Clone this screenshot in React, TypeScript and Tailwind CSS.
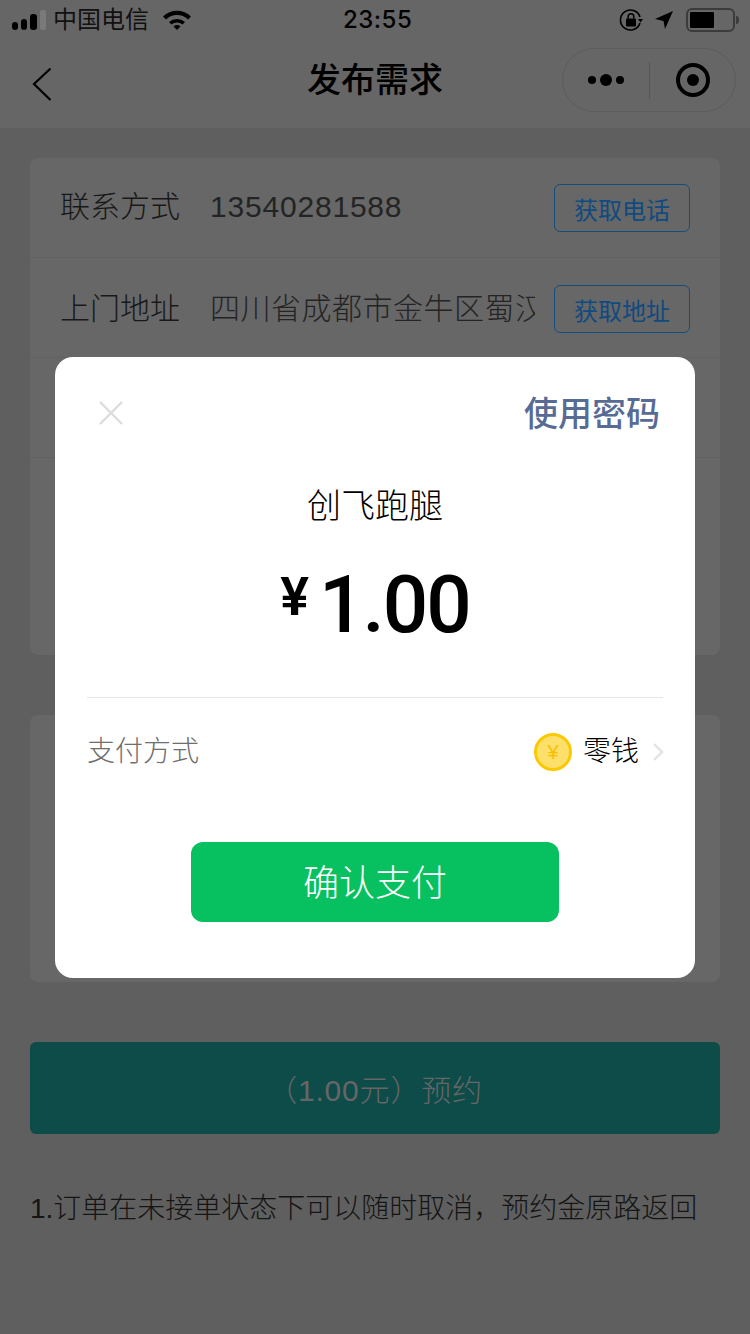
import React from "react";

const font = { fontFamily: '"Liberation Sans", "Noto Sans CJK SC", sans-serif' };

const StatusBar: React.FC = () => (
  <div className="flex h-10 items-center justify-between pl-3 pr-[11px] text-black">
    <div className="flex items-center">
      <div className="flex items-end gap-[3px]">
        <span className="mb-[1px] h-2 w-[6px] rounded-[3px] bg-black" />
        <span className="mb-[1px] h-[11px] w-[6px] rounded-[3px] bg-black" />
        <span className="mb-[1px] h-[16px] w-[7px] rounded-[3px] bg-black" />
        <span className="mb-[1px] h-5 w-[6px] rounded-[2px] bg-[#7a7a7a]" />
      </div>
      <span className="ml-[7px] text-[24px] leading-none text-[#111]">中国电信</span>
      <svg className="ml-[14px]" width="28" height="20" viewBox="0 0 28 20">
        <path d="M0 6.5 A20 20 0 0 1 28 6.5 L25 9.5 A16 16 0 0 0 3 9.5 Z" fill="#000" />
        <path d="M6 12 A12 12 0 0 1 22 12 L19.5 14.5 A8.5 8.5 0 0 0 8.5 14.5 Z" fill="#000" />
        <path d="M10.5 16.5 A5 5 0 0 1 17.5 16.5 L14 20 Z" fill="#000" />
      </svg>
    </div>
    <span className="absolute left-[343px] text-[24px] font-medium leading-none tracking-[0.5px]" style={{ fontFamily: "Inter, sans-serif" }}>
      23:55
    </span>
    <div className="flex items-center">
      <svg width="24" height="24" viewBox="0 0 24 24" fill="none">
        <path d="M21 15 A10 10 0 1 1 21 9" stroke="#000" strokeWidth="1.6" />
        <path d="M19 11 L24 11 L21.5 14.5 Z" fill="#000" />
        <rect x="7" y="10.5" width="10" height="8" rx="1" fill="#000" />
        <path d="M9.2 10.5 V8.5 A2.8 2.8 0 0 1 14.8 8.5 V10.5" stroke="#000" strokeWidth="1.6" />
      </svg>
      <svg className="ml-[11px]" width="20" height="20" viewBox="0 0 20 20">
        <path d="M19 1 L11 19 L9.5 11 L1 9 Z" fill="#000" />
      </svg>
      <div className="ml-[12px] flex items-center">
        <div className="h-6 w-[49px] rounded-[6px] border-2 border-[#3c3c3c] p-[2px]">
          <div className="h-full w-[24px] rounded-[1px] bg-black" />
        </div>
        <span className="ml-[1px] h-2 w-[3px] rounded-r-sm bg-[#3c3c3c]" />
      </div>
    </div>
  </div>
);

const NavBar: React.FC = () => (
  <div className="relative flex h-[88px] items-center justify-center">
    <svg className="absolute left-[30px] top-[27px]" width="24" height="36" viewBox="0 0 24 36" fill="none">
      <path d="M20.5 1.5 L4 17 L20.5 33" stroke="#000" strokeWidth="2.2" />
    </svg>
    <span className="mb-[8px] text-[34px] font-medium leading-none text-black">发布需求</span>
    <div className="absolute left-[562px] top-[8px] flex h-[64px] w-[174px] items-center rounded-full border border-[#5c5c5c]">
      <div className="flex w-[86px] items-center justify-center gap-[4px]">
        <span className="h-2 w-2 rounded-full bg-black" />
        <span className="h-3 w-3 rounded-full bg-black" />
        <span className="h-2 w-2 rounded-full bg-black" />
      </div>
      <span className="h-[37px] w-px bg-[#555]" />
      <div className="flex flex-1 items-center justify-center">
        <div className="flex h-[34px] w-[34px] items-center justify-center rounded-full border-[4px] border-black">
          <span className="h-3 w-3 rounded-full bg-black" />
        </div>
      </div>
    </div>
  </div>
);

const Row: React.FC<{ label: string; value: string; action?: string; latin?: boolean; lower?: boolean }> = ({ label, value, action, latin, lower }) => (
  <div className="flex h-[100px] items-center border-b border-[#616161] px-[30px]">
    <span className={`w-[150px] shrink-0 text-[30px] font-light leading-none text-[#181818] ${lower ? "mt-[3px]" : "mb-[1px]"}`}>{label}</span>
    <span
      className={`w-[325px] shrink-0 overflow-hidden whitespace-nowrap text-[30px] font-light leading-none text-[#242424] ${latin ? "mb-[1px] tracking-[0.8px]" : "mt-[3px] tracking-[0.5px]"}`}
    >
      {value}
    </span>
    {action && (
      <button className={`ml-auto flex h-12 w-[136px] items-center justify-center rounded-[6px] border border-[#144d7f] pt-[6px] text-[24px] leading-none text-[#0f4a80] ${lower ? "mt-[2px]" : ""}`}>
        {action}
      </button>
    )}
  </div>
);

const PayModal: React.FC = () => (
  <div className="absolute left-[55px] top-[357px] flex h-[621px] w-[640px] flex-col rounded-[18px] bg-white">
    <div className="flex items-start justify-between pl-[44px] pr-[35px] pt-[37px]">
      <svg className="mt-[7px]" width="24" height="24" viewBox="0 0 24 24" fill="none">
        <path d="M1 1 L23 23 M23 1 L1 23" stroke="#dcdcdc" strokeWidth="2.4" />
      </svg>
      <span className="text-[34px] font-medium leading-[40px] text-[#576b95]">使用密码</span>
    </div>
    <div className="mt-[51px] text-center text-[34px] font-light leading-[42px] text-black">创飞跑腿</div>
    <div className="mt-[35px] flex h-[82px] items-center justify-center text-black" style={{ fontFamily: "Roboto, sans-serif" }}>
      <span className="mb-[12px] mr-[10px] text-[54px] font-semibold leading-none">¥</span>
      <span className="mt-[4px] text-[80px] font-medium leading-none tracking-[-2px]">1.00</span>
    </div>
    <div className="mx-[32px] mt-[53px] h-px bg-[#e5e5e5]" />
    <div className="mx-[32px] mt-[34px] flex h-[40px] items-center justify-between">
      <span className="text-[28px] font-light leading-none text-[#6e6e6e]">支付方式</span>
      <div className="flex items-center">
        <div className="flex h-[38px] w-[38px] items-center justify-center rounded-full border-[3px] border-[#fcc900] bg-[#fddf6c] text-[20px] font-medium leading-none text-[#f9c000]">
          ¥
        </div>
        <span className="ml-[11px] text-[28px] font-light leading-none text-black">零钱</span>
        <svg className="ml-[13px] mr-[-1px]" width="12" height="20" viewBox="0 0 12 20" fill="none">
          <path d="M2 2 L10 10 L2 18" stroke="#e3e3e3" strokeWidth="2.4" />
        </svg>
      </div>
    </div>
    <button className="mx-auto mt-[70px] flex h-[80px] w-[368px] items-center justify-center rounded-[12px] bg-[#07c160] pt-[4px] text-[36px] font-light leading-none text-white">
      确认支付
    </button>
  </div>
);

export default function App() {
  return (
    <div className="relative h-[1334px] w-[750px] overflow-hidden bg-[#5f5f5f]" style={font}>
      <div className="h-[128px] bg-[#666666]">
        <StatusBar />
        <NavBar />
      </div>
      <div className="px-[30px] pt-[30px]">
        <div className="h-[497px] overflow-hidden rounded-[8px] bg-[#676767]">
          <Row label="联系方式" value="13540281588" action="获取电话" latin />
          <Row label="上门地址" value="四川省成都市金牛区蜀汉路" action="获取地址" lower />
          <Row label="" value="" />
        </div>
        <div className="mt-[60px] h-[267px] rounded-[8px] bg-[#676767]" />
        <button className="mt-[60px] flex h-[92px] w-full items-center justify-center rounded-[6px] bg-[#0d4c49] pt-[6px] text-[30px] font-light leading-none tracking-[0.8px] text-[#666666]">
          （1.00元）预约
        </button>
        <p className="mt-[57px] whitespace-nowrap text-[28px] font-light leading-[36px] text-[#151515]">
          1.订单在未接单状态下可以随时取消，预约金原路返回
        </p>
      </div>
      <PayModal />
    </div>
  );
}
